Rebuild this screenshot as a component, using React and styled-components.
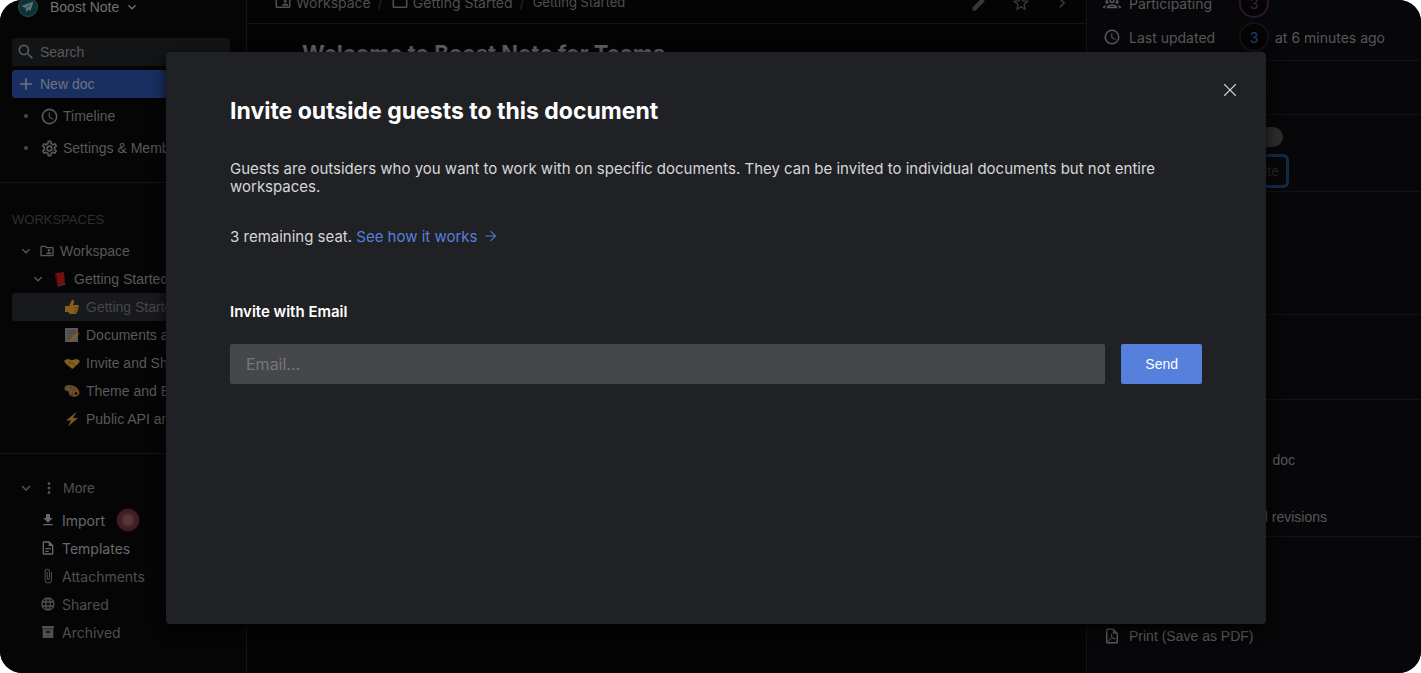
import React from 'react';
import styled, { createGlobalStyle } from 'styled-components';

const ui = '"Liberation Sans", Arial, sans-serif';
const text = 'Inter, "Liberation Sans", sans-serif';

const GlobalStyle = createGlobalStyle`
  *, *::before, *::after { box-sizing: border-box; }
  body { margin: 0; background: #fff; font-family: ${ui}; font-size: 14px; }
  button, input { font: inherit; color: inherit; }
  button { border: 0; padding: 0; background: none; cursor: pointer; }
  ul { list-style: none; margin: 0; padding: 0; }
  h1, h2, h3, p { margin: 0; }
  a { color: inherit; text-decoration: none; }
`;

const paths = {
  magnify: 'M9.5,3A6.5,6.5 0 0,1 16,9.5C16,11.11 15.41,12.59 14.44,13.73L14.71,14H15.5L20.5,19L19,20.5L14,15.5V14.71L13.73,14.44C12.59,15.41 11.11,16 9.5,16A6.5,6.5 0 0,1 3,9.5A6.5,6.5 0 0,1 9.5,3M9.5,5C7,5 5,7 5,9.5C5,12 7,14 9.5,14C12,14 14,12 14,9.5C14,7 12,5 9.5,5Z',
  plus: 'M19,13H13V19H11V13H5V11H11V5H13V11H19V13Z',
  clock: 'M12,20A8,8 0 0,0 20,12A8,8 0 0,0 12,4A8,8 0 0,0 4,12A8,8 0 0,0 12,20M12,2A10,10 0 0,1 22,12A10,10 0 0,1 12,22C6.47,22 2,17.5 2,12A10,10 0 0,1 12,2M12.5,7V12.25L17,14.92L16.25,16.15L11,13V7H12.5Z',
  cog: 'M12,8A4,4 0 0,1 16,12A4,4 0 0,1 12,16A4,4 0 0,1 8,12A4,4 0 0,1 12,8M12,10A2,2 0 0,0 10,12A2,2 0 0,0 12,14A2,2 0 0,0 14,12A2,2 0 0,0 12,10M10,22C9.75,22 9.54,21.82 9.5,21.58L9.13,18.93C8.5,18.68 7.96,18.34 7.44,17.94L4.95,18.95C4.73,19.03 4.46,18.95 4.34,18.73L2.34,15.27C2.21,15.05 2.27,14.78 2.46,14.63L4.57,12.97L4.5,12L4.57,11L2.46,9.37C2.27,9.22 2.21,8.95 2.34,8.73L4.34,5.27C4.46,5.05 4.73,4.96 4.95,5.05L7.44,6.05C7.96,5.66 8.5,5.32 9.13,5.07L9.5,2.42C9.54,2.18 9.75,2 10,2H14C14.25,2 14.46,2.18 14.5,2.42L14.87,5.07C15.5,5.32 16.04,5.66 16.56,6.05L19.05,5.05C19.27,4.96 19.54,5.05 19.66,5.27L21.66,8.73C21.79,8.95 21.73,9.22 21.54,9.37L19.43,11L19.5,12L19.43,13L21.54,14.63C21.73,14.78 21.79,15.05 21.66,15.27L19.66,18.73C19.54,18.95 19.27,19.04 19.05,18.95L16.56,17.95C16.04,18.34 15.5,18.68 14.87,18.93L14.5,21.58C14.46,21.82 14.25,22 14,22H10M11.25,4L10.88,6.61C9.68,6.86 8.62,7.5 7.85,8.39L5.44,7.35L4.69,8.65L6.8,10.2C6.4,11.37 6.4,12.64 6.8,13.8L4.68,15.36L5.43,16.66L7.86,15.62C8.63,16.5 9.68,17.14 10.87,17.38L11.24,20H12.76L13.13,17.39C14.32,17.14 15.37,16.5 16.14,15.62L18.57,16.66L19.32,15.36L17.2,13.81C17.6,12.64 17.6,11.37 17.2,10.2L19.31,8.65L18.56,7.35L16.15,8.39C15.38,7.5 14.32,6.86 13.12,6.62L12.75,4H11.25Z',
  chevronDown: 'M7.41,8.58L12,13.17L16.59,8.58L18,10L12,16L6,10L7.41,8.58Z',
  chevronRight: 'M8.59,16.58L13.17,12L8.59,7.41L10,6L16,12L10,18L8.59,16.58Z',
  folderAccount: 'M20 6H12L10 4H4C2.9 4 2 4.9 2 6V18C2 19.1 2.9 20 4 20H20C21.1 20 22 19.1 22 18V8C22 6.9 21.1 6 20 6M20 18H4V6H9.17L11.17 8H20V18M15 9C16.1 9 17 9.9 17 11S16.1 13 15 13 13 12.1 13 11 13.9 9 15 9M19 17H11V16C11 14.67 13.67 14 15 14S19 14.67 19 16V17Z',
  folder: 'M20,18H4V8H20M20,6H12L10,4H4C2.89,4 2,4.89 2,6V18A2,2 0 0,0 4,20H20A2,2 0 0,0 22,18V8C22,6.89 21.1,6 20,6Z',
  dots: 'M12,16A2,2 0 0,1 14,18A2,2 0 0,1 12,20A2,2 0 0,1 10,18A2,2 0 0,1 12,16M12,10A2,2 0 0,1 14,12A2,2 0 0,1 12,14A2,2 0 0,1 10,12A2,2 0 0,1 12,10M12,4A2,2 0 0,1 14,6A2,2 0 0,1 12,8A2,2 0 0,1 10,6A2,2 0 0,1 12,4Z',
  download: 'M5,20H19V18H5M19,9H15V3H9V9H5L12,16L19,9Z',
  document: 'M6,2A2,2 0 0,0 4,4V20A2,2 0 0,0 6,22H18A2,2 0 0,0 20,20V8L14,2H6M6,4H13V9H18V20H6V4M8,12V14H16V12H8M8,16V18H13V16H8Z',
  paperclip: 'M16.5,6V17.5A4,4 0 0,1 12.5,21.5A4,4 0 0,1 8.5,17.5V5A2.5,2.5 0 0,1 11,2.5A2.5,2.5 0 0,1 13.5,5V15.5A1,1 0 0,1 12.5,16.5A1,1 0 0,1 11.5,15.5V6H10V15.5A2.5,2.5 0 0,0 12.5,18A2.5,2.5 0 0,0 15,15.5V5A4,4 0 0,0 11,1A4,4 0 0,0 7,5V17.5A5.5,5.5 0 0,0 12.5,23A5.5,5.5 0 0,0 18,17.5V6H16.5Z',
  web: 'M16.36,14C16.44,13.34 16.5,12.68 16.5,12C16.5,11.32 16.44,10.66 16.36,10H19.74C19.9,10.64 20,11.31 20,12C20,12.69 19.9,13.36 19.74,14M14.59,19.56C15.19,18.45 15.65,17.25 15.97,16H18.92C17.96,17.65 16.43,18.93 14.59,19.56M14.34,14H9.66C9.56,13.34 9.5,12.68 9.5,12C9.5,11.32 9.56,10.65 9.66,10H14.34C14.43,10.65 14.5,11.32 14.5,12C14.5,12.68 14.43,13.34 14.34,14M12,19.96C11.17,18.76 10.5,17.43 10.09,16H13.91C13.5,17.43 12.83,18.76 12,19.96M8,8H5.08C6.03,6.34 7.57,5.06 9.4,4.44C8.8,5.55 8.35,6.75 8,8M5.08,16H8C8.35,17.25 8.8,18.45 9.4,19.56C7.57,18.93 6.03,17.65 5.08,16M4.26,14C4.1,13.36 4,12.69 4,12C4,11.31 4.1,10.64 4.26,10H7.64C7.56,10.66 7.5,11.32 7.5,12C7.5,12.68 7.56,13.34 7.64,14M12,4.03C12.83,5.23 13.5,6.57 13.91,8H10.09C10.5,6.57 11.17,5.23 12,4.03M18.92,8H15.97C15.65,6.75 15.19,5.55 14.59,4.44C16.43,5.07 17.96,6.34 18.92,8M12,2C6.47,2 2,6.5 2,12A10,10 0 0,0 12,22A10,10 0 0,0 22,12A10,10 0 0,0 12,2Z',
  archive: 'M3,3H21V7H3V3M4,8H20V21H4V8M9.5,11A0.5,0.5 0 0,0 9,11.5V13H15V11.5A0.5,0.5 0 0,0 14.5,11H9.5Z',
  pencil: 'M20.71,7.04C21.1,6.65 21.1,6 20.71,5.63L18.37,3.29C18,2.9 17.35,2.9 16.96,3.29L15.12,5.12L18.87,8.87M3,17.25V21H6.75L17.81,9.93L14.06,6.18L3,17.25Z',
  star: 'M12,15.39L8.24,17.66L9.23,13.38L5.91,10.5L10.29,10.13L12,6.09L13.71,10.13L18.09,10.5L14.77,13.38L15.76,17.66M22,9.24L14.81,8.63L12,2L9.19,8.63L2,9.24L7.45,13.97L5.82,21L12,17.27L18.18,21L16.54,13.97L22,9.24Z',
  group: 'M12,5A3.5,3.5 0 0,0 8.5,8.5A3.5,3.5 0 0,0 12,12A3.5,3.5 0 0,0 15.5,8.5A3.5,3.5 0 0,0 12,5M12,7A1.5,1.5 0 0,1 13.5,8.5A1.5,1.5 0 0,1 12,10A1.5,1.5 0 0,1 10.5,8.5A1.5,1.5 0 0,1 12,7M5.5,8A2.5,2.5 0 0,0 3,10.5C3,11.44 3.53,12.25 4.29,12.68C4.65,12.88 5.06,13 5.5,13C5.94,13 6.35,12.88 6.71,12.68C7.08,12.47 7.39,12.17 7.62,11.81C6.89,10.86 6.5,9.7 6.5,8.5C6.5,8.41 6.5,8.31 6.5,8.22C6.2,8.08 5.86,8 5.5,8M18.5,8C18.14,8 17.8,8.08 17.5,8.22C17.5,8.31 17.5,8.41 17.5,8.5C17.5,9.7 17.11,10.86 16.38,11.81C16.5,12 16.63,12.15 16.78,12.3C16.94,12.45 17.1,12.58 17.29,12.68C17.65,12.88 18.06,13 18.5,13C18.94,13 19.35,12.88 19.71,12.68C20.47,12.25 21,11.44 21,10.5A2.5,2.5 0 0,0 18.5,8M12,14C9.66,14 5,15.17 5,17.5V19H19V17.5C19,15.17 14.34,14 12,14M4.71,14.55C2.78,14.78 0,15.76 0,17.5V19H3V17.07C3,16.06 3.69,15.22 4.71,14.55M19.29,14.55C20.31,15.22 21,16.06 21,17.07V19H24V17.5C24,15.76 21.22,14.78 19.29,14.55M12,16C13.53,16 15.24,16.5 16.23,17H7.77C8.76,16.5 10.47,16 12,16Z',
  pdf: 'M14,2L20,8V20A2,2 0 0,1 18,22H6A2,2 0 0,1 4,20V4A2,2 0 0,1 6,2H14M18,20V9H13V4H6V20H18M10.92,12.31C10.68,11.54 10.15,9.08 11.55,9.04C12.95,9 12.03,12.16 12.03,12.16C12.42,13.65 14.05,14.72 14.05,14.72C14.55,14.57 17.4,14.24 17,15.72C16.57,17.2 13.5,15.81 13.5,15.81C11.55,15.95 10.09,16.47 10.09,16.47C8.96,18.58 7.64,19.5 7.1,18.61C6.43,17.5 9.23,16.07 9.23,16.07C10.68,13.72 10.9,12.35 10.92,12.31M11.57,13.15C11.17,14.45 10.37,15.84 10.37,15.84C11.22,15.5 13.08,15.11 13.08,15.11C11.94,14.11 11.59,13.16 11.57,13.15Z',
  close: 'M18.700,6.200L17.800,5.300L12,11.100L6.200,5.300L5.300,6.200L11.100,12L5.300,17.800L6.200,18.700L12,12.900L17.800,18.700L18.700,17.800L12.900,12L18.700,6.200Z',
  arrow: 'M4,11.200V12.800H17L10.700,18.900L11.800,20L19.840,12L11.800,4L10.700,5.100L17,11.200H4Z',
};

const Svg = styled.svg`
  flex: none;
  display: block;
`;

const Icon = ({ name, size = 18 }) => (
  <Svg viewBox="0 0 24 24" width={size} height={size} fill="currentColor" aria-hidden="true">
    <path d={paths[name]} />
  </Svg>
);

const emojis = {
  book: (
    <>
      <path d="M3 2 L12 1 L13 13 L5 15 Z" fill="#6f1010" />
      <path d="M3 2 L4.500 3 L6 15 L5 15 Z" fill="#3e0808" />
      <path d="M5.500 15 L13 13 L13.500 13.500 L6 15.500 Z" fill="#5d5a58" />
    </>
  ),
  thumb: (
    <>
      <path d="M1 7 H5 L8 1 Q10 0 10 3 L9 6 H14 Q16 7 14 9 Q15 10 14 11 Q14 13 13 13 Q13 15 11 15 H6 L4 13 H1 Z" fill="#86601a" />
      <path d="M10 8.500 H14 M10 11 H14 M9.500 13 H13" stroke="#5b3d0c" strokeWidth="0.6" />
    </>
  ),
  memo: (
    <>
      <path d="M1 1 H14 V15 H1 Z" fill="#59595a" />
      <path d="M3 4 H12 M3 6.500 H12 M3 9 H9 M3 11.500 H7" stroke="#3c3c3d" strokeWidth="0.8" />
      <path d="M6 13 L13 5 L15 7 L8 14 L5 15 Z" fill="#85601a" />
      <path d="M12.500 5.500 L13.500 4.500 L15.500 6.500 L14.500 7.500 Z" fill="#743039" />
    </>
  ),
  handshake: (
    <>
      <path d="M0 6 L3 4 L8 5 L13 4 L16 6 L14 9 L9 13.500 Q8 14 7 13 L2 9 Z" fill="#80601c" />
      <path d="M7 5.500 L5 8 L8 8 L12 11" stroke="#503808" strokeWidth="0.7" fill="none" />
    </>
  ),
  palette: (
    <>
      <path d="M0.500 5 Q1 2 5 2 Q11 2 14 6 Q17 10 14 12.500 Q11 15 6 12.500 Q4 11 5 9.500 Q5 8 3 8 Q0 8 0.500 5 Z" fill="#6f4c22" />
      <circle cx="3.500" cy="5" r="1.300" fill="#23655a" />
      <circle cx="7" cy="4.500" r="1.300" fill="#27477c" />
      <circle cx="10.500" cy="6.500" r="1.300" fill="#7b3428" />
      <circle cx="8" cy="11.500" r="1.400" fill="#572b6c" />
      <circle cx="12" cy="10.500" r="1.300" fill="#0a0a0a" />
    </>
  ),
  bolt: <path d="M12.500 1 L2 9.500 L7 9.500 L4 15.500 L14 7 L9 7 Z" fill="#7b5924" />,
};

const Emoji = ({ name }) => (
  <Svg viewBox="0 0 16 16" width="16" height="16" aria-hidden="true">{emojis[name]}</Svg>
);

const Shell = styled.div`
  position: relative;
  display: flex;
  height: 100vh;
  overflow: hidden;
  border-radius: 22px;
  background: #040404;
  color: #565759;
`;

const Sidebar = styled.aside`
  flex: none;
  width: 247px;
  border-right: 1px solid #141416;
  background: #050506;
`;

const SpaceSwitcher = styled.button`
  display: flex;
  align-items: center;
  gap: 5px;
  height: 14px;
  margin-left: 18px;
  color: #707173;
  & > span { margin-left: 7px; }
`;

const Logo = () => (
  <Svg viewBox="0 0 20 20" width="20" height="20" aria-hidden="true">
    <circle cx="10" cy="10" r="9.500" fill="#0b3338" stroke="#304d50" />
    <path d="M15.500 4.500 L3.500 9 L7.500 11 L8.500 15.500 L10 12.500 L12.500 14 Z" fill="#5d7375" />
    <path d="M8 11 L12 8" stroke="#0b3338" strokeWidth="0.8" />
  </Svg>
);

const SideActions = styled.nav`
  display: flex;
  flex-direction: column;
  gap: 4px;
  padding: 24px 16px 20px 12px;
  border-bottom: 1px solid #151516;
`;

const SideButton = styled.button`
  display: flex;
  align-items: center;
  gap: 4px;
  height: 28px;
  padding-left: 4px;
  border-radius: 3px;
  background: ${(p) => p.$bg || 'transparent'};
  color: ${(p) => p.$color || '#58595b'};
`;

const Bullet = styled.i`
  width: 4px;
  height: 4px;
  margin: 0 8px;
  border-radius: 50%;
  background: #47484a;
`;

const TreeSection = styled.section`
  padding: 27px 16px 20px 12px;
  border-bottom: 1px solid #151516;
`;

const TreeTitle = styled.h3`
  height: 27px;
  line-height: 20px;
  font-size: 13px;
  font-weight: 400;
  color: #2d2e31;
`;

const TreeRow = styled.li`
  display: flex;
  align-items: center;
  height: 28px;
  padding-left: ${(p) => p.$indent}px;
  gap: ${(p) => p.$gap || 6}px;
  border-radius: 3px;
  white-space: nowrap;
  background: ${(p) => (p.$active ? '#18191c' : 'transparent')};
  color: ${(p) => (p.$active ? '#46474a' : '#58595b')};
`;

const MoreSection = styled.section`
  padding: 20px 16px 0 17px;
`;

const MoreToggle = styled.button`
  display: flex;
  align-items: center;
  gap: 5px;
  height: 28px;
  color: #505153;
`;

const MoreList = styled.ul`
  padding: 4px 0 0 23px;
  font-family: ${text};
`;

const MoreItem = styled.li`
  display: flex;
  align-items: center;
  gap: 6px;
  height: 28px;
  color: ${(p) => (p.$strong ? '#68696b' : '#4e4f51')};
`;

const Beacon = styled.i`
  width: 22px;
  height: 22px;
  margin-left: 6px;
  border-radius: 50%;
  background: radial-gradient(circle, #563438 5px, #401e22 7px);
  box-shadow: 0 0 2px #401e22;
`;

const Main = styled.main`
  flex: 1;
  min-width: 0;
  font-family: ${text};
`;

const Topbar = styled.header`
  display: flex;
  align-items: flex-start;
  justify-content: space-between;
  height: 24px;
  padding: 0 14px 0 27px;
  border-bottom: 1px solid #141415;
`;

const Crumbs = styled.nav`
  display: flex;
  align-items: center;
  gap: 4px;
  height: 4px;
  color: #4e4f51;
`;

const Slash = styled.span`
  margin: 0 4px 0 3px;
  color: #28292b;
`;

const CurrentCrumb = styled.span`
  font-size: 13px;
`;

const Tools = styled.div`
  display: flex;
  align-items: center;
  gap: 21px;
  height: 6px;
  color: #37383b;
`;

const DocTitle = styled.h1`
  padding: 14px 55px;
  font-size: 22px;
  line-height: 30px;
  color: #606060;
`;

const Details = styled.aside`
  flex: none;
  width: 335px;
  border-left: 1px solid #141416;
  background: #070709;
`;

const Section = styled.section`
  display: flex;
  flex-direction: column;
  justify-content: ${(p) => p.$justify || 'center'};
  height: ${(p) => p.$height}px;
  padding-bottom: ${(p) => p.$bottom || 0}px;
  border-bottom: 1px solid #131315;
`;

const DetailRow = styled.div`
  display: flex;
  flex: none;
  align-items: center;
  height: 34px;
  padding-left: 16px;
  font-family: ${text};
`;

const DetailLabel = styled.span`
  display: flex;
  align-items: center;
  gap: 8px;
  width: 136px;
`;

const Avatar = styled.span`
  display: grid;
  place-items: center;
  width: 30px;
  height: 30px;
  margin-right: 6px;
  border: 2px solid ${(p) => p.$ring};
  border-radius: 50%;
  background: #040405;
  color: ${(p) => p.$color};
`;

const EndRow = styled.div`
  display: flex;
  justify-content: flex-end;
  line-height: 17px;
  margin-bottom: ${(p) => p.$space || 0}px;
  padding-right: ${(p) => p.$inset}px;
`;

const Toggle = styled.button`
  width: 40px;
  height: 20px;
  border-radius: 10px;
  background: #2b2b2c;
`;

const InviteButton = styled.button`
  height: 34px;
  padding: 0 7px;
  border: 3px solid #122b45;
  border-radius: 6px;
  color: #252628;
`;

const Export = styled.button`
  display: flex;
  align-items: center;
  gap: 8px;
  margin: 90px 0 0 16px;
`;

const Overlay = styled.div`
  position: absolute;
  inset: 0;
  display: flex;
  padding: 52px 155px 49px 166px;
`;

const Dialog = styled.div`
  display: flex;
  flex-direction: column;
  flex: 1;
  padding: 24px 24px 24px 64px;
  border-radius: 4px;
  background: #202125;
  box-shadow: 0 4px 14px rgba(0, 0, 0, 0.8);
  color: #d6d7d9;
  font-family: ${text};
  font-size: 15px;
  line-height: 18px;
`;

const CloseButton = styled.button`
  align-self: flex-end;
  display: grid;
  place-items: center;
  width: 24px;
  height: 28px;
`;

const DialogBody = styled.div`
  padding-right: 40px;
`;

const DialogTitle = styled.h2`
  margin-top: -10px;
  font-size: 23px;
  line-height: 34px;
  color: #fff;
`;

const Copy = styled.p`
  margin-top: 32px;
`;

const Link = styled.a`
  display: inline-flex;
  gap: 5px;
  color: #5580dc;
`;

const Label = styled.label`
  display: block;
  margin-top: 57px;
  font-weight: 600;
  color: #fff;
`;

const Form = styled.form`
  display: flex;
  gap: 16px;
  margin-top: 23px;
`;

const EmailInput = styled.input`
  flex: 1;
  min-width: 0;
  height: 40px;
  padding: 0 16px;
  border: 0;
  border-radius: 2px;
  background: #46474b;
  color: #fff;
  font-size: 16px;
  &::placeholder { color: #77787b; opacity: 1; }
`;

const SendButton = styled.button`
  height: 40px;
  padding: 0 24px;
  border-radius: 2px;
  background: #5580dc;
  color: #fff;
  font-family: ${ui};
  font-size: 14px;
`;

const docs = [
  ['thumb', 'Getting Started'],
  ['memo', 'Documents and Folders'],
  ['handshake', 'Invite and Share'],
  ['palette', 'Theme and Editor'],
  ['bolt', 'Public API and more'],
];

const more = [
  ['download', 'Import', true],
  ['document', 'Templates', true],
  ['paperclip', 'Attachments'],
  ['web', 'Shared'],
  ['archive', 'Archived'],
];

export default function App() {
  return (
    <Shell>
      <GlobalStyle />
      <Sidebar>
        <SpaceSwitcher><Logo /><span>Boost Note</span><Icon name="chevronDown" size={16} /></SpaceSwitcher>
        <SideActions>
          <SideButton $bg="#131416"><Icon name="magnify" size={20} />Search</SideButton>
          <SideButton $bg="#1a2f61" $color="#6f737d"><Icon name="plus" size={20} />New doc</SideButton>
          <SideButton><Bullet /><Icon name="clock" size={19} />Timeline</SideButton>
          <SideButton><Bullet /><Icon name="cog" size={19} />Settings &amp; Members</SideButton>
        </SideActions>
        <TreeSection>
          <TreeTitle>WORKSPACES</TreeTitle>
          <ul>
            <TreeRow $indent={6} $gap={5}><Icon name="chevronDown" size={16} /><Icon name="folderAccount" size={16} />Workspace</TreeRow>
            <TreeRow $indent={18}><Icon name="chevronDown" size={16} /><Emoji name="book" />Getting Started</TreeRow>
            {docs.map(([emoji, name], i) => (
              <TreeRow key={name} $indent={52} $active={i === 0}><Emoji name={emoji} />{name}</TreeRow>
            ))}
          </ul>
        </TreeSection>
        <MoreSection>
          <MoreToggle><Icon name="chevronDown" /><Icon name="dots" />More</MoreToggle>
          <MoreList>
            {more.map(([icon, name, strong]) => (
              <MoreItem key={name} $strong={strong}>
                <Icon name={icon} size={16} />{name}{name === 'Import' && <Beacon />}
              </MoreItem>
            ))}
          </MoreList>
        </MoreSection>
      </Sidebar>

      <Main>
        <Topbar>
          <Crumbs>
            <Icon name="folderAccount" />Workspace<Slash>/</Slash>
            <Icon name="folder" />Getting Started<Slash>/</Slash><CurrentCrumb>Getting Started</CurrentCrumb>
          </Crumbs>
          <Tools>
            <Icon name="pencil" size={20} /><Icon name="star" size={20} /><Icon name="chevronRight" size={20} />
          </Tools>
        </Topbar>
        <DocTitle>Welcome to Boost Note for Teams</DocTitle>
      </Main>

      <Details>
        <Section $height={61} $bottom={6} $justify="flex-end">
          <DetailRow>
            <DetailLabel><Icon name="group" />Participating</DetailLabel>
            <Avatar $ring="#2b1631" $color="#3d2145">3</Avatar>
          </DetailRow>
          <DetailRow>
            <DetailLabel><Icon name="clock" />Last updated</DetailLabel>
            <Avatar $ring="#121214" $color="#1e3f7c">3</Avatar>at 6 minutes ago
          </DetailRow>
        </Section>
        <Section $height={54}>
          <DetailRow><DetailLabel /><Avatar $ring="#0e0e10" $color="#1e3f7c">3</Avatar></DetailRow>
        </Section>
        <Section $height={77} $bottom={3} $justify="flex-end">
          <EndRow $inset={138} $space={7}><Toggle aria-label="Guest access" /></EndRow>
          <EndRow $inset={132}><InviteButton>Invite</InviteButton></EndRow>
        </Section>
        <Section $height={123} />
        <Section $height={85} />
        <Section $height={137} $bottom={10} $justify="flex-end">
          <EndRow $inset={126} $space={40}>doc</EndRow>
          <EndRow $inset={94}>full revisions</EndRow>
        </Section>
        <Export><Icon name="pdf" size={18} />Print (Save as PDF)</Export>
      </Details>

      <Overlay>
        <Dialog role="dialog" aria-modal="true" aria-labelledby="invite-title">
          <CloseButton aria-label="Close"><Icon name="close" size={22} /></CloseButton>
          <DialogBody>
            <DialogTitle id="invite-title">Invite outside guests to this document</DialogTitle>
            <Copy>
              Guests are outsiders who you want to work with on specific documents. They can be invited to individual documents but not entire workspaces.
            </Copy>
            <Copy>
              3 remaining seat. <Link href="#guests">See how it works <Icon name="arrow" size={16} /></Link>
            </Copy>
            <Label htmlFor="guest-email">Invite with Email</Label>
            <Form onSubmit={(e) => e.preventDefault()}>
              <EmailInput id="guest-email" type="email" placeholder="Email..." />
              <SendButton type="submit">Send</SendButton>
            </Form>
          </DialogBody>
        </Dialog>
      </Overlay>
    </Shell>
  );
}
